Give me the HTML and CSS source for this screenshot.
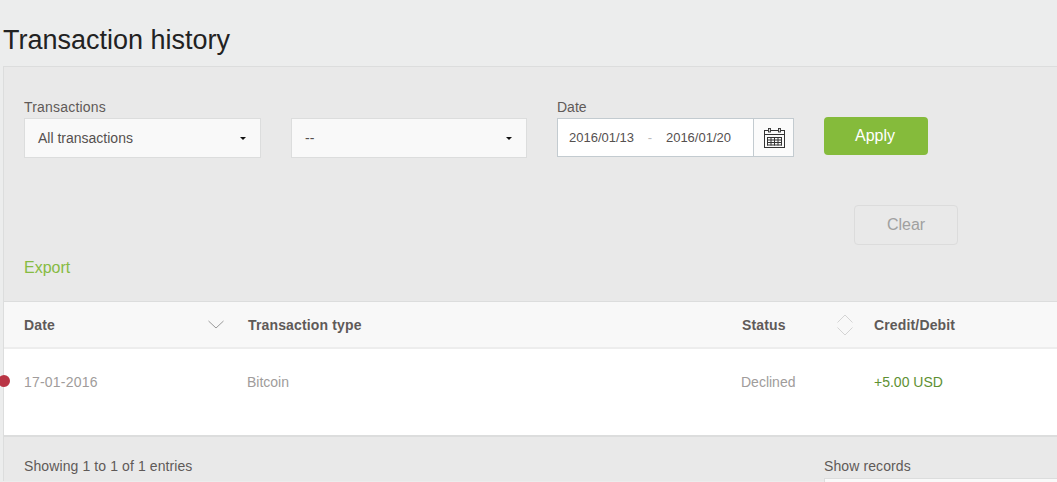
FILE: index.html
```html
<!DOCTYPE html>
<html lang="en">
<head>
<meta charset="utf-8">
<title>Transaction history</title>
<link rel="stylesheet" href="styles.css">
</head>
<body>
<h1 class="title">Transaction history</h1>
<section class="panel">
  <form class="filters">
    <div class="field">
      <label class="label wide">Transactions</label>
      <div class="select"><span>All transactions</span><i class="caret"></i></div>
    </div>
    <div class="field">
      <div class="select"><span>--</span><i class="caret"></i></div>
    </div>
    <div class="field">
      <label class="label">Date</label>
      <div class="range">
        <div class="dates"><span>2016/01/13</span><span class="dash">-</span><span>2016/01/20</span></div>
        <div class="cal">
          <svg width="21" height="20" viewBox="0 0 21 20" fill="none" stroke="#333">
            <rect x=".5" y="2.500" width="20" height="17"/>
            <path d="M1 6.500H20"/>
            <rect x="4.500" y=".5" width="2" height="3.500" fill="#ddd" stroke-width=".9"/>
            <rect x="14.500" y=".5" width="2" height="3.500" fill="#ddd" stroke-width=".9"/>
            <path d="M3 9.500H18M3 12H18M3 14.500H18M3 17H18M3.500 9V17.500M7 9V17.500M10.500 9V17.500M14 9V17.500M17.500 9V17.500" stroke="#333"/>
          </svg>
        </div>
      </div>
    </div>
    <button class="btn apply" type="button">Apply</button>
  </form>
  <div class="clear-row"><button class="btn clear" type="button">Clear</button></div>
  <a class="export">Export</a>
  <div class="table">
    <div class="row head">
      <div class="cell date-head">Date
        <svg width="16" height="9" viewBox="0 0 16 9" fill="none" stroke="#999"><path d="M.5 1 8 8 15.500 1"/></svg>
      </div>
      <div class="cell type-head">Transaction type</div>
      <div class="cell status-head">Status
        <svg width="16" height="22" viewBox="0 0 16 22" fill="none" stroke="#d4d4d4"><path d="M.5 8.500 8 1 15.500 8.500M.5 13.500 8 21 15.500 13.500"/></svg>
      </div>
      <div class="cell credit-head">Credit/Debit</div>
    </div>
    <div class="row body">
      <i class="dot"></i>
      <div class="cell when">17-01-2016</div>
      <div class="cell">Bitcoin</div>
      <div class="cell">Declined</div>
      <div class="cell amount">+5.00 USD</div>
    </div>
  </div>
  <footer class="foot">
    <div class="entries">Showing 1 to 1 of 1 entries</div>
    <div class="records">
      <div class="records-label">Show records</div>
      <div class="records-box"></div>
    </div>
  </footer>
</section>
</body>
</html>
```
FILE: styles.css
```css
html, body {
  margin: 0;
  height: 482px;
  overflow: hidden;
}
body {
  background: #eceded;
  font-family: "Liberation Sans", Arial, sans-serif;
  font-size: 14px;
  color: #5f5a58;
}
.title {
  margin: 0;
  padding: 25px 0 0 3px;
  height: 41px;
  font-size: 27px;
  line-height: 31px;
  font-weight: 400;
  color: #222;
}
.panel {
  position: relative;
  margin-left: 3px;
  height: 415px;
  box-sizing: border-box;
  background: #e9e9e9;
  border: 1px solid #dcdddd;
  border-right: 0;
  border-bottom: 0;
}
.filters {
  display: flex;
  align-items: flex-start;
  padding: 32px 0 0 20px;
  height: 106px;
  box-sizing: border-box;
}
.field {
  width: 237px;
  margin-right: 30px;
}
.label {
  display: block;
  height: 19px;
  line-height: 17px;
}
.wide {
  letter-spacing: .2px;
}
.field:nth-child(2) {
  padding-top: 19px;
  width: 236px;
}
.select {
  display: flex;
  align-items: center;
  justify-content: space-between;
  height: 40px;
  box-sizing: border-box;
  padding: 0 13px;
  background: #f9f9f9;
  border: 1px solid #dcdddd;
  color: #55504f;
}
.caret {
  border: 3.500px solid transparent;
  border-top: 3.500px solid #111;
  border-bottom: 0;
  margin-right: 1px;
}
.range {
  display: flex;
  height: 39px;
  box-sizing: border-box;
  background: #fff;
  border: 1px solid #c3cbd0;
}
.dates {
  flex: 1;
  display: flex;
  align-items: center;
  justify-content: space-between;
  padding: 0 22px 0 11px;
  font-size: 13px;
  color: #55504f;
}
.dash {
  color: #bbb;
}
.cal {
  width: 40px;
  box-sizing: border-box;
  padding-left: 2px;
  border-left: 1px solid #c3cbd0;
  display: flex;
  align-items: center;
  justify-content: center;
  background: #fbfbfb;
}
.btn {
  width: 104px;
  font: 16px "Liberation Sans", Arial, sans-serif;
  border-radius: 4px;
  padding: 0;
}
.apply {
  height: 38px;
  margin-top: 18px;
  background: #85bb3b;
  border: 0;
  color: #fff;
  padding-right: 2px;
}
.clear-row {
  padding-left: 850px;
  margin-top: 32px;
}
.clear {
  height: 40px;
  background: transparent;
  border: 1px solid #dcdcdc;
  color: #a0a0a0;
  display: block;
}
.export {
  display: block;
  margin: 14px 0 0 20px;
  height: 42px;
  font-size: 16px;
  line-height: 18px;
  color: #86bb42;
}
.row {
  display: grid;
  grid-template-columns: 223px 494px 133px 1fr;
  padding-left: 20px;
}
.head {
  height: 48px;
  box-sizing: border-box;
  background: #f8f8f8;
  border-top: 1px solid #dcdddd;
  border-bottom: 2px solid #ededed;
  font-weight: 700;
  font-size: 14px;
  letter-spacing: .15px;
  align-items: center;
}
.body {
  position: relative;
  height: 88px;
  box-sizing: border-box;
  background: #fff;
  border-bottom: 2px solid #dcdddd;
  padding-top: 25px;
  color: #a09c9b;
  line-height: 16px;
}
.when {
  letter-spacing: .2px;
}
.date-head, .status-head {
  display: flex;
  align-items: center;
  justify-content: space-between;
}
.date-head { padding-right: 23px; }
.status-head { padding-right: 21px; padding-left: 1px; }
.type-head { padding-left: 1px; }
.amount { color: #5e9032; }
.dot {
  position: absolute;
  left: -6px;
  top: 26px;
  width: 12px;
  height: 12px;
  border-radius: 50%;
  background: #b93545;
}
.foot {
  display: flex;
  padding: 21px 0 0 20px;
  letter-spacing: .1px;
}
.entries {
  flex: none;
  width: 800px;
  line-height: 17px;
}
.records {
  flex: 1;
  min-width: 0;
}
.records-label {
  line-height: 17px;
}
.records-box {
  height: 5px;
  box-sizing: border-box;
  margin-top: 3px;
  background: #f9f9f9;
  border: 1px solid #dcdddd;
  border-right: 0;
  border-bottom: 0;
}
```
